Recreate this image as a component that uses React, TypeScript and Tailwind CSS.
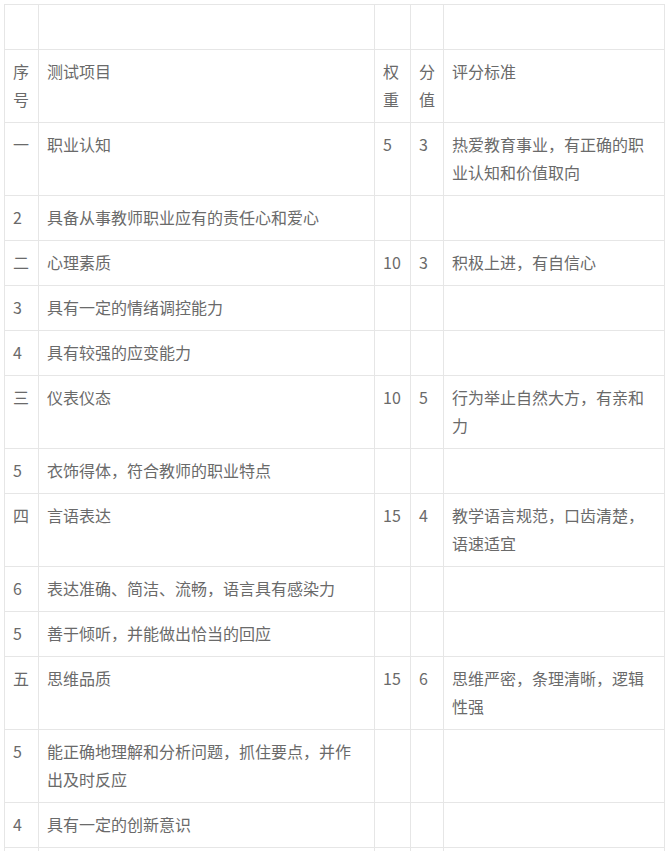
import React from "react";

type Row = [string, string, string, string, string];

const rows: Row[] = [
  ["", "", "", "", ""],
  ["序号", "测试项目", "权重", "分值", "评分标准"],
  ["一", "职业认知", "5", "3", "热爱教育事业，有正确的职业认知和价值取向"],
  ["2", "具备从事教师职业应有的责任心和爱心", "", "", ""],
  ["二", "心理素质", "10", "3", "积极上进，有自信心"],
  ["3", "具有一定的情绪调控能力", "", "", ""],
  ["4", "具有较强的应变能力", "", "", ""],
  ["三", "仪表仪态", "10", "5", "行为举止自然大方，有亲和力"],
  ["5", "衣饰得体，符合教师的职业特点", "", "", ""],
  ["四", "言语表达", "15", "4", "教学语言规范，口齿清楚，语速适宜"],
  ["6", "表达准确、简洁、流畅，语言具有感染力", "", "", ""],
  ["5", "善于倾听，并能做出恰当的回应", "", "", ""],
  ["五", "思维品质", "15", "6", "思维严密，条理清晰，逻辑性强"],
  ["5", "能正确地理解和分析问题，抓住要点，并作出及时反应", "", "", ""],
  ["4", "具有一定的创新意识", "", "", ""],
  ["", "", "", "", ""],
];

export default function App() {
  return (
    <div
      className="bg-white pl-[4px] pt-[4px]"
      style={{ fontFamily: '"Noto Sans CJK SC", "Noto Sans", sans-serif' }}
    >
      <table className="table-fixed border-collapse text-[16px] leading-[28px] text-[#6a6a6a]">
        <colgroup>
          <col className="w-[34px]" />
          <col className="w-[336px]" />
          <col className="w-[36px]" />
          <col className="w-[33px]" />
          <col className="w-[221px]" />
        </colgroup>
        <tbody>
          {rows.map((r, i) => (
            <tr key={i}>
              {r.map((c, j) => (
                <td
                  key={j}
                  className="border border-[#e6e6e6] px-[8px] pt-[7px] pb-[9px] align-top break-all h-[45px]"
                >
                  {c}
                </td>
              ))}
            </tr>
          ))}
        </tbody>
      </table>
    </div>
  );
}
